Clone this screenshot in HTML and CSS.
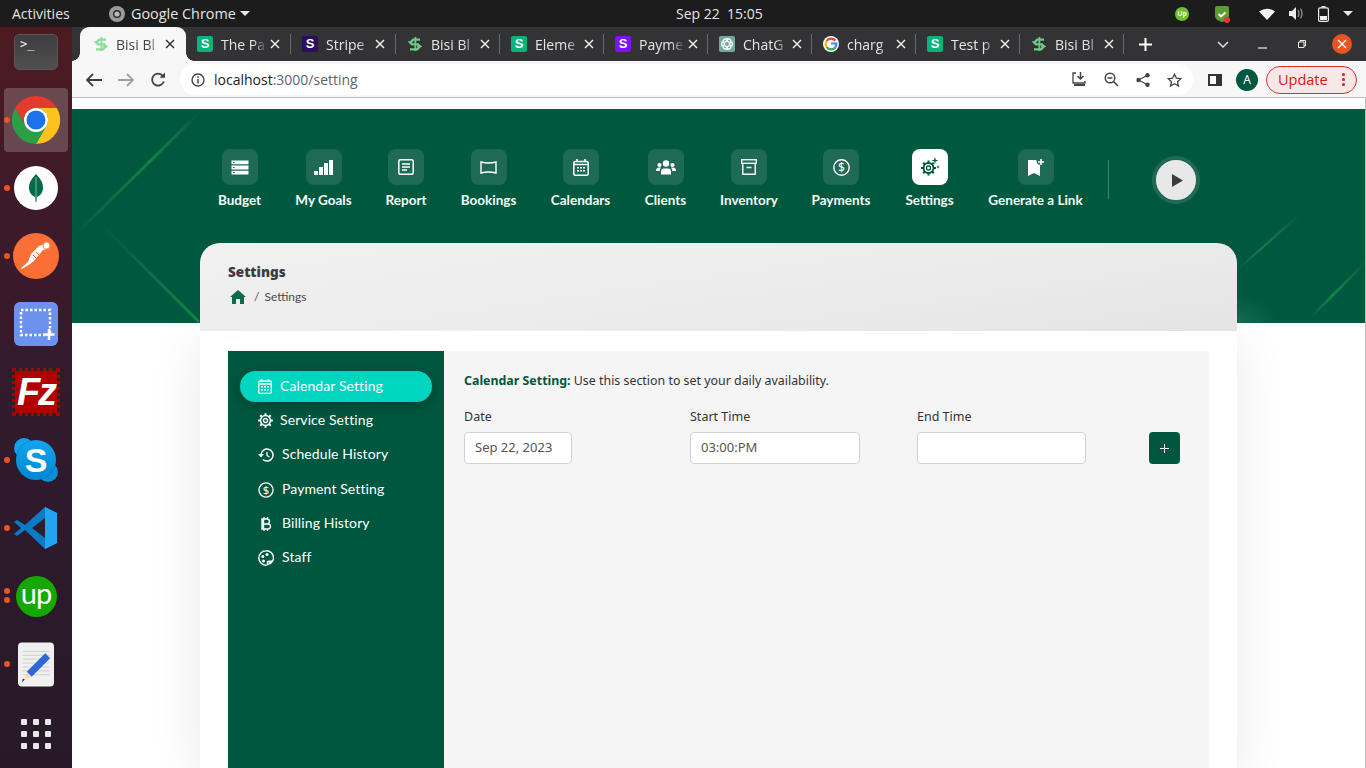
FILE: index.html
```html
<!DOCTYPE html>
<html lang="en">
<head>
<meta charset="utf-8">
<title>Settings</title>
<link rel="stylesheet" href="styles.css">
</head>
<body>
<svg class="defs" aria-hidden="true">
  <symbol id="bisi" viewBox="0 0 16 16">
    <path d="M13 3.600H6.200L3.200 6.600 5 8.400h6l2 2-3 3H3" fill="none" stroke="currentColor" stroke-width="2.300"/>
    <path d="M8.400 1v14" stroke="currentColor" stroke-width="1.800"/>
    <path d="M1 5.800h5M10 10.400h5" stroke="currentColor" stroke-width="1"/>
  </symbol>
  <symbol id="close" viewBox="0 0 10 10"><path d="M1 1l8 8M9 1l-8 8" stroke="currentColor" stroke-width="1.500"/></symbol>
</svg>

<header class="topbar">
  <span class="activities">Activities</span>
  <svg class="app-icon" width="16" height="16" viewBox="0 0 16 16"><circle cx="8" cy="8" r="8" fill="#9a9a9a"/><circle cx="8" cy="8" r="4" fill="#2a2a2a"/><circle cx="8" cy="8" r="2.600" fill="#b8b8b8"/></svg>
  <span class="appname">Google Chrome</span>
  <span class="caret"></span>
  <span class="clock">Sep 22&nbsp; 15:05</span>
  <div class="tray">
    <span class="tray-up">Up</span>
    <svg class="tray-shield" width="16" height="18" viewBox="0 0 16 18"><path d="M1 3q0-2 2-2h10q2 0 2 2v8q0 3-4 5l-3 1-3-1q-4-2-4-5z" fill="#5c9c36"/><path d="M4.500 9l2.500 2.500 4.500-4" fill="none" stroke="#fff" stroke-width="1.800"/><circle cx="13" cy="15" r="3" fill="#e33"/></svg>
    <svg class="tray-wifi" width="16" height="12" viewBox="0 0 16 12"><path d="M0 3.600Q8-2.200 16 3.600L8 12z" fill="#f2f2f2"/></svg>
    <svg class="tray-vol" width="15" height="13" viewBox="0 0 15 13"><path d="M0 4h3l4-4v13l-4-4H0z" fill="#eee"/><path d="M9 3q2 3.500 0 7M11.500 1.500q3 5 0 10" fill="none" stroke="#999" stroke-width="1.200"/></svg>
    <svg class="tray-bat" width="11" height="16" viewBox="0 0 11 16"><path d="M3.500 0h4v1.500h-4z" fill="#eee"/><rect x=".6" y="1.800" width="9.800" height="13.600" rx="1.500" fill="none" stroke="#eee" stroke-width="1.200"/><rect x="2" y="10" width="7" height="4" fill="#eee"/></svg>
    <span class="caret small"></span>
  </div>
</header>

<div class="desktop">
  <aside class="dock">
    <div class="slot first">
      <div class="terminal"><span>&gt;_</span></div>
    </div>
    <div class="slot running active">
      <svg width="48" height="48" viewBox="0 0 48 48">
        <path d="M24 0A24 24 0 0 0 3.200 12L13.600 30A12 12 0 0 1 24 12H44.800A24 24 0 0 0 24 0Z" fill="#e33b2e"/>
        <path d="M44.800 12H24A12 12 0 0 1 34.400 30L24 48A24 24 0 0 0 44.800 12Z" fill="#fcc31e"/>
        <path d="M3.200 12L13.600 30A12 12 0 0 0 34.400 30L24 48A24 24 0 0 1 3.200 12Z" fill="#2a9f48"/>
        <circle cx="24" cy="24" r="12" fill="#fff"/><circle cx="24" cy="24" r="9.500" fill="#1a73e8"/>
      </svg>
    </div>
    <div class="slot running">
      <svg width="44" height="44" viewBox="0 0 44 44"><circle cx="22" cy="22" r="22" fill="#fff"/><path d="M22 8q8 8 7 15-1 6-6 8l-.5 5h-1L21 31q-5-2-6-8-1-7 7-15z" fill="#046a4a"/><path d="M22 11v24" stroke="#bcd6cb" stroke-width=".7"/></svg>
    </div>
    <div class="slot running">
      <svg width="46" height="46" viewBox="0 0 46 46"><circle cx="23" cy="23" r="23" fill="#f96f36"/><path d="M34 9l3 3-3 4-4 1-9 11-4 3-8 5-1-1 7-6 3-8 8-8 3-1z" fill="#fff"/><path d="M23 19l5 5M20 22l5 5" stroke="#f96f36" stroke-width="1"/><circle cx="33.500" cy="12.500" r="3.500" fill="#fff" stroke="#f96f36" stroke-width=".8"/></svg>
    </div>
    <div class="slot">
      <svg width="44" height="44" viewBox="0 0 44 44"><rect width="44" height="44" rx="6" fill="#6c92ee"/><rect x="7" y="8" width="29" height="25" fill="none" stroke="#fff" stroke-width="2.500" stroke-dasharray="2.500 2"/><path d="M35 27v11M29.500 32.500h11" stroke="#fff" stroke-width="2.500"/></svg>
    </div>
    <div class="slot">
      <div class="filezilla"><span>Fz</span></div>
    </div>
    <div class="slot running">
      <div class="skype"><span>S</span></div>
    </div>
    <div class="slot running">
      <svg width="44" height="44" viewBox="0 0 44 44"><path d="M31 1l12 6v30l-12 6L11 24 3 30 0 28l7-6-7-6 3-2 8 5z" fill="#0a7bc4"/><path d="M31 1l12 6v30l-12 6z" fill="#22a4f1"/><path d="M31 12L18 22l13 10z" fill="#2e1c30"/></svg>
    </div>
    <div class="slot running double">
      <div class="upwork"><span>up</span></div>
    </div>
    <div class="slot running">
      <svg width="36" height="45" viewBox="0 0 37 45"><rect width="37" height="45" rx="4" fill="#f0f0f0"/><path d="M5 9h27M5 13h27M5 17h27M5 21h27M5 25h27M5 29h27M5 33h27" stroke="#cfcfcf"/><path d="M28 11l5 5L14 35l-5-5z" fill="#2f66d8"/><path d="M9 30l5 5-7 3z" fill="#f7d9b5"/><path d="M7 38l-3 3 1-4z" fill="#333"/></svg>
    </div>
    <div class="slot last">
      <div class="apps"><i></i><i></i><i></i><i></i><i></i><i></i><i></i><i></i><i></i></div>
    </div>
  </aside>

  <div class="browser">
    <div class="tabstrip">
      <div class="tab current"><svg class="fav bisi-light"><use href="#bisi"/></svg><span class="tab-title">Bisi Bl</span><svg class="tab-x"><use href="#close"/></svg></div>
      <div class="tab"><span class="fav s green">S</span><span class="tab-title">The Pa</span><svg class="tab-x"><use href="#close"/></svg></div>
      <div class="tab"><span class="fav s navy">S</span><span class="tab-title">Stripe</span><svg class="tab-x"><use href="#close"/></svg></div>
      <div class="tab"><svg class="fav bisi-mid"><use href="#bisi"/></svg><span class="tab-title">Bisi Bl</span><svg class="tab-x"><use href="#close"/></svg></div>
      <div class="tab"><span class="fav s green">S</span><span class="tab-title">Eleme</span><svg class="tab-x"><use href="#close"/></svg></div>
      <div class="tab"><span class="fav s purple">S</span><span class="tab-title">Payme</span><svg class="tab-x"><use href="#close"/></svg></div>
      <div class="tab"><svg class="fav" viewBox="0 0 16 16"><rect width="16" height="16" rx="2" fill="#74aa9c"/><g fill="none" stroke="#fff" stroke-width=".9"><circle cx="8" cy="8" r="5.500"/><ellipse cx="8" cy="8" rx="5.500" ry="2.400" transform="rotate(60 8 8)"/><ellipse cx="8" cy="8" rx="5.500" ry="2.400" transform="rotate(-60 8 8)"/><ellipse cx="8" cy="8" rx="5.500" ry="2.400"/></g></svg><span class="tab-title">ChatG</span><svg class="tab-x"><use href="#close"/></svg></div>
      <div class="tab"><svg class="fav" viewBox="0 0 16 16"><circle cx="8" cy="8" r="8" fill="#fff"/><g fill="none" stroke-width="2.200"><path d="M12.300 4.700A5.400 5.400 0 0 0 3.600 5" stroke="#ea4335"/><path d="M3.600 5a5.400 5.400 0 0 0 0 6" stroke="#fbbc05"/><path d="M3.600 11a5.400 5.400 0 0 0 8.600.500" stroke="#34a853"/><path d="M12.200 11.500A5.400 5.400 0 0 0 13.400 7.500H8" stroke="#4285f4"/></g></svg><span class="tab-title">charg</span><svg class="tab-x"><use href="#close"/></svg></div>
      <div class="tab"><span class="fav s green">S</span><span class="tab-title">Test p</span><svg class="tab-x"><use href="#close"/></svg></div>
      <div class="tab"><svg class="fav bisi-mid"><use href="#bisi"/></svg><span class="tab-title">Bisi Bl</span><svg class="tab-x"><use href="#close"/></svg></div>
      <svg class="newtab" width="13" height="13" viewBox="0 0 13 13"><path d="M6.500 0v13M0 6.500h13" stroke="#fff" stroke-width="2"/></svg>
      <svg class="win chev" width="12" height="7" viewBox="0 0 12 7"><path d="M1 1l5 5 5-5" fill="none" stroke="#ddd" stroke-width="1.500"/></svg>
      <svg class="win min" width="9" height="9" viewBox="0 0 9 9"><path d="M0 8h9" stroke="#eee" stroke-width="1.200"/></svg>
      <svg class="win max" width="8" height="8" viewBox="0 0 8 8"><path d="M2 2V.5h5.500V6H6M.5 2h5.500v5.500H.5z" fill="none" stroke="#eee"/></svg>
      <span class="win-close"><svg width="10" height="10" viewBox="0 0 10 10"><path d="M1 1l8 8M9 1l-8 8" stroke="#fff" stroke-width="1.500"/></svg></span>
    </div>

    <div class="toolbar">
      <svg class="tb first-tb" width="16" height="14" viewBox="0 0 16 14"><path d="M7 1L1 7l6 6M1 7h15" fill="none" stroke="#3c4043" stroke-width="1.800"/></svg>
      <svg class="tb" width="16" height="14" viewBox="0 0 16 14"><path d="M9 1l6 6-6 6M15 7H0" fill="none" stroke="#a0a0a0" stroke-width="1.800"/></svg>
      <svg class="tb" width="16" height="16" viewBox="0 0 16 16"><path d="M13.800 9.500A6 6 0 1 1 12.500 3.500" fill="none" stroke="#3c4043" stroke-width="1.800"/><path d="M9.500 5.800H15V.5z" fill="#3c4043"/></svg>
      <div class="omnibox">
        <svg class="info" width="14" height="14" viewBox="0 0 14 14"><circle cx="7" cy="7" r="6" fill="none" stroke="#444" stroke-width="1.400"/><path d="M7 6v4.500M7 3.300v1.500" stroke="#444" stroke-width="1.500"/></svg>
        <span class="url"><b>localhost</b>:3000/setting</span>
        <svg class="omni-i first-omni" width="16" height="15" viewBox="0 0 16 15"><path d="M4 1H1v10h12V9" fill="none" stroke="#444" stroke-width="1.300"/><path d="M8.500 0v6M5.500 4l3 3 3-3" fill="none" stroke="#444" stroke-width="1.500"/><path d="M2 13h11" stroke="#444" stroke-width="2"/></svg>
        <svg class="omni-i" width="15" height="15" viewBox="0 0 15 15"><circle cx="6" cy="6" r="4.800" fill="none" stroke="#444" stroke-width="1.400"/><path d="M9.500 9.500L14 14M3.500 6h5" stroke="#444" stroke-width="1.500"/></svg>
        <svg class="omni-i" width="14" height="14" viewBox="0 0 14 14"><circle cx="11.500" cy="2.300" r="2.200" fill="#444"/><circle cx="2.500" cy="7" r="2.200" fill="#444"/><circle cx="11.500" cy="11.700" r="2.200" fill="#444"/><path d="M11.500 2.300L2.500 7l9 4.700" fill="none" stroke="#444" stroke-width="1.200"/></svg>
        <svg class="omni-i" width="15" height="14" viewBox="0 0 15 14"><path d="M7.500 1.200l1.900 4 4.400.5-3.300 3 .9 4.300-3.900-2.200L3.600 13l.9-4.300-3.300-3 4.400-.5z" fill="none" stroke="#444" stroke-width="1.300"/></svg>
      </div>
      <svg class="panel" width="14" height="12" viewBox="0 0 14 12"><path d="M0 0h14v12H0z" fill="#333"/><path d="M2 2h6v8H2z" fill="#fff"/></svg>
      <span class="avatar">A</span>
      <div class="update"><span>Update</span><i class="dots"><b></b><b></b><b></b></i></div>
    </div>

    <main class="page">
      <section class="hero">
        <svg class="streaks" viewBox="0 0 1293 214" preserveAspectRatio="none" aria-hidden="true">
          <defs>
            <linearGradient id="st1" x1="1" y1="0" x2="0" y2="1"><stop offset="0" stop-color="#12844a" stop-opacity="0"/><stop offset=".4" stop-color="#12844a"/><stop offset="1" stop-color="#12844a" stop-opacity="0"/></linearGradient>
            <linearGradient id="st2" x1="0" y1="0" x2="1" y2="1"><stop offset="0" stop-color="#12844a" stop-opacity="0"/><stop offset="1" stop-color="#12844a"/></linearGradient>
            <linearGradient id="st3" x1="1" y1="0" x2="0" y2="1"><stop offset="0" stop-color="#12844a" stop-opacity=".1"/><stop offset=".6" stop-color="#12844a"/><stop offset="1" stop-color="#12844a" stop-opacity="0"/></linearGradient>
            <radialGradient id="glow"><stop offset="0" stop-color="#2c7a62" stop-opacity=".5"/><stop offset="1" stop-color="#2c7a62" stop-opacity="0"/></radialGradient>
            <filter id="soft"><feGaussianBlur stdDeviation=".7"/></filter>
          </defs>
          <ellipse cx="1165" cy="214" rx="40" ry="28" fill="url(#glow)"/>
          <g filter="url(#soft)">
            <path d="M131 0L0 129" stroke="url(#st1)" stroke-width="3"/>
            <path d="M27 113L127 213" stroke="url(#st2)" stroke-width="3"/>
            <path d="M1294 153L1238 209" stroke="url(#st3)" stroke-width="3"/>
            <path d="M1227 106L1165 161" stroke="url(#st3)" stroke-width="2"/>
          </g>
        </svg>
        <nav class="mainnav">
          <a class="navitem"><span class="tile"><svg width="18" height="15" viewBox="0 0 18 15"><path d="M.5.500h17v3.800H.5zM.5 5.600h17v3.800H.5zM.5 10.700h17v3.800H.5z" fill="#fff"/><path d="M2 2h1.500v1H2zM2 7h1.500v1H2zM2 12h1.500v1H2z" fill="#1f6a55"/></svg></span><span class="lbl">Budget</span></a>
          <a class="navitem"><span class="tile"><svg width="19" height="15" viewBox="0 0 19 15"><path d="M0 11h4v4H0zM5 7h4v8H5zM10 3h4v12h-4zM15 0h4v15h-4z" fill="#fff"/></svg></span><span class="lbl">My Goals</span></a>
          <a class="navitem"><span class="tile"><svg width="16" height="16" viewBox="0 0 16 16"><rect x=".8" y=".8" width="14.400" height="14.400" rx="1.500" fill="none" stroke="#fff" stroke-width="1.500"/><path d="M4 5h8M4 8h8M4 11h5" stroke="#fff" stroke-width="1.400"/></svg></span><span class="lbl">Report</span></a>
          <a class="navitem"><span class="tile"><svg width="17" height="13" viewBox="0 0 17 13"><path d="M1 1q7.500 2 15 0v11q-7.500-2-15 0z" fill="none" stroke="#fff" stroke-width="1.400"/></svg></span><span class="lbl">Bookings</span></a>
          <a class="navitem"><span class="tile"><svg width="16" height="17" viewBox="0 0 16 17"><rect x=".8" y="2.500" width="14.400" height="13.700" rx="1.500" fill="none" stroke="#fff" stroke-width="1.500"/><path d="M4 0v3M12 0v3M1 5.500h14" stroke="#fff" stroke-width="1.500"/><path d="M4 8h2v1.500H4zM7 8h2v1.500H7zM10 8h2v1.500h-2zM4 11h2v1.500H4zM7 11h2v1.500H7zM10 11h2v1.500h-2z" fill="#fff"/></svg></span><span class="lbl">Calendars</span></a>
          <a class="navitem"><span class="tile"><svg width="20" height="15" viewBox="0 0 20 15"><circle cx="10" cy="3.500" r="3.200" fill="#fff"/><circle cx="3.500" cy="5" r="2.100" fill="#fff"/><circle cx="16.500" cy="5" r="2.100" fill="#fff"/><path d="M5 14.500v-3q0-3 3-3h4q3 0 3 3v3z" fill="#fff"/><path d="M0 11q0-3.500 3-3.500h2Q3.500 9 3.700 11zM20 11q0-3.500-3-3.500h-2q1.500 1.500 1.300 3.500z" fill="#fff"/></svg></span><span class="lbl">Clients</span></a>
          <a class="navitem"><span class="tile"><svg width="16" height="16" viewBox="0 0 16 16"><rect x=".7" y=".7" width="14.600" height="3.600" fill="none" stroke="#fff" stroke-width="1.400"/><path d="M1.800 4.500v10.800h12.400V4.500" fill="none" stroke="#fff" stroke-width="1.400"/><path d="M5.500 8.500h5" stroke="#fff" stroke-width="1.500"/></svg></span><span class="lbl">Inventory</span></a>
          <a class="navitem"><span class="tile"><svg width="17" height="17" viewBox="0 0 17 17"><circle cx="8.500" cy="8.500" r="7.700" fill="none" stroke="#fff" stroke-width="1.400"/><text class="dollar" x="8.500" y="12.800" text-anchor="middle">$</text></svg></span><span class="lbl">Payments</span></a>
          <a class="navitem on"><span class="tile"><svg width="20" height="20" viewBox="0 0 20 20"><g transform="translate(8.500 11)"><circle r="2" fill="none" stroke="#00573f" stroke-width="1.300"/><circle r="5" fill="none" stroke="#00573f" stroke-width="2"/><path d="M0-7.500v2.500M0 5v2.500M-7.500 0H-5M5 0h2.500M-5.300-5.300l1.800 1.800M3.500 3.500l1.800 1.800M5.300-5.300L3.500-3.500M-3.500 3.500l-1.800 1.800" stroke="#00573f" stroke-width="2"/></g><path d="M15 0l.8 2.700 2.700.8-2.700.8-.8 2.700-.8-2.700-2.700-.8 2.700-.8zM18 8l.5 1.500L20 10l-1.500.5L18 12l-.5-1.500L16 10l1.500-.5z" fill="#00573f"/></svg></span><span class="lbl">Settings</span></a>
          <a class="navitem"><span class="tile"><svg width="18" height="17" viewBox="0 0 18 17"><path d="M1 1h8.500q-.5 4 3.500 5v11L7 14l-6 3z" fill="#fff"/><path d="M14 0v6M11 3h6" stroke="#fff" stroke-width="1.600"/></svg></span><span class="lbl">Generate a Link</span></a>
          <span class="navdiv"></span>
          <button class="play" type="button" aria-label="Play"><svg width="11" height="13" viewBox="0 0 11 13"><path d="M0 0l11 6.500L0 13z" fill="#3c3c3c"/></svg></button>
        </nav>
        <div class="crumbs">
          <h1>Settings</h1>
          <div class="trail">
            <svg width="16" height="14" viewBox="0 0 16 14"><path d="M8 0l8 7h-2v7h-4V9H6v5H2V7H0z" fill="#0b6b4f"/></svg>
            <span class="sep">/</span><span>Settings</span>
          </div>
        </div>
      </section>

      <section class="card">
        <aside class="sidebar">
          <a class="side on"><svg width="14" height="15" viewBox="0 0 14 15"><rect x=".7" y="2" width="12.600" height="12.300" rx="1.200" fill="none" stroke="#fff" stroke-width="1.300"/><path d="M3.500 0v3M10.500 0v3M1 5h12" stroke="#fff" stroke-width="1.300"/><path d="M3 7h2v1.500H3zM6 7h2v1.500H6zM9 7h2v1.500H9zM3 10h2v1.500H3zM6 10h2v1.500H6zM9 10h2v1.500H9z" fill="#fff"/></svg><span>Calendar Setting</span></a>
          <a class="side"><svg width="15" height="15" viewBox="-7.500 -7.500 15 15"><circle r="2" fill="none" stroke="#fff" stroke-width="1.300"/><circle r="4.900" fill="none" stroke="#fff" stroke-width="1.500"/><path d="M0-7.300v2.400M0 4.900v2.400M-7.300 0h2.400M4.900 0h2.400M-5.200-5.200l1.700 1.700M3.500 3.500l1.700 1.700M5.200-5.200L3.500-3.500M-3.500 3.500l-1.700 1.700" stroke="#fff" stroke-width="2"/></svg><span>Service Setting</span></a>
          <a class="side wide"><svg width="16" height="14" viewBox="0 0 16 14"><path d="M3 7a6 6 0 1 1 2 4.500" fill="none" stroke="#fff" stroke-width="1.500"/><path d="M0 6h6L3 9.500z" fill="#fff"/><path d="M9 4v3.500l2.500 1.500" fill="none" stroke="#fff" stroke-width="1.300"/></svg><span>Schedule History</span></a>
          <a class="side wide"><svg width="16" height="16" viewBox="0 0 17 17"><circle cx="8.500" cy="8.500" r="7.500" fill="none" stroke="#fff" stroke-width="1.400"/><text class="dollar" x="8.500" y="12.800" text-anchor="middle">$</text></svg><span>Payment Setting</span></a>
          <a class="side wide"><svg width="16" height="16" viewBox="-2 0 16 16"><path d="M2 3h5a2.500 2.500 0 0 1 0 5H2h6a2.500 2.500 0 0 1 0 5H2zM3.500 3v10M4 1v2M7.500 1v2M4 13v2M7.500 13v2" fill="none" stroke="#fff" stroke-width="1.400"/></svg><span>Billing History</span></a>
          <a class="side wide"><svg width="16" height="16" viewBox="0 0 16 16"><path d="M8 .8a7.200 7.200 0 1 0 0 14.400q2 0 1.500-2-.5-2 1.500-2h2.500q2 0 2-3A7.200 7.200 0 0 0 8 .8z" fill="none" stroke="#fff" stroke-width="1.400"/><path d="M10 15l1-4h4q-1 3.500-5 4z" fill="#fff"/><circle cx="4.800" cy="6.500" r="1.500" fill="#fff"/><circle cx="9" cy="4.500" r="1.500" fill="#fff"/><circle cx="5.500" cy="11" r="1.500" fill="#fff"/></svg><span>Staff</span></a>
        </aside>
        <div class="panel-main">
          <p class="intro"><strong>Calendar Setting:</strong> Use this section to set your daily availability.</p>
          <form class="avail">
            <label class="field"><span>Date</span><input class="in-date" type="text" value="Sep 22, 2023"></label>
            <label class="field"><span>Start Time</span><input class="in-start" type="text" value="03:00:PM"></label>
            <label class="field"><span>End Time</span><input class="in-end" type="text" value=""></label>
            <button class="add" type="button" aria-label="Add"><svg width="9" height="9" viewBox="0 0 9 9"><path d="M4.500 0v9M0 4.500h9" stroke="#fff" stroke-width="1"/></svg></button>
          </form>
        </div>
      </section>
    </main>
  </div>
</div>
</body>
</html>
```

FILE: styles.css
```css
* { box-sizing: border-box; }
html, body { margin: 0; height: 768px; overflow: hidden; }
body { font-family: "Noto Sans", "Open Sans", sans-serif; background: #fff; display: flex; flex-direction: column; }
.defs { display: none; }

/* GNOME top bar */
.topbar { height: 27px; flex: none; background: #1c1c1c; color: #e4e4e4; display: flex; align-items: center; font-size: 14px; font-family: "Open Sans", sans-serif; padding-left: 12px; }
.activities { width: 97px; }
.app-icon { margin-right: 6px; }
.appname { width: 109px; white-space: nowrap; font-size: 14.4px; }
.caret { width: 0; height: 0; border-left: 5px solid transparent; border-right: 5px solid transparent; border-top: 5px solid #e8e8e8; }
.clock { margin-left: 426px; width: 100px; white-space: nowrap; font-size: 14px; }
.tray { margin-left: 399px; display: flex; align-items: center; }
.tray-up { width: 14px; height: 14px; border-radius: 50%; background: #6cc02f; color: #e8ffd8; font-size: 7px; font-weight: 700; text-align: center; line-height: 14px; margin-right: 25px; }
.tray-shield { margin-right: 29px; }
.tray-wifi { margin-right: 14px; }
.tray-vol { margin-right: 14px; }
.tray-bat { margin-right: 14px; }

.desktop { flex: 1; display: flex; min-height: 0; }

/* Dock */
.dock { width: 72px; flex: none; background: linear-gradient(#4d1b20 0, #3d1a2a 25%, #2f1a2c 60%, #271a28 100%); display: flex; flex-direction: column; align-items: center; }
.slot { position: relative; width: 72px; height: 68px; flex: none; display: flex; align-items: center; justify-content: center; }
.slot.first { height: 59px; align-items: flex-start; padding-top: 7px; }
.slot.last { padding-top: 4px; }
.slot.active::before { content: ""; position: absolute; left: 4px; top: 2px; width: 64px; height: 64px; border-radius: 4px; background: rgba(255, 255, 255, .2); }
.slot > * { position: relative; }
.slot.running::after { content: ""; position: absolute; left: 4px; top: 31px; width: 6px; height: 6px; border-radius: 50%; background: #e95420; }
.slot.double::after { top: 26px; box-shadow: 0 9px 0 #e95420; }
.terminal { width: 44px; height: 36px; border-radius: 5px; background: linear-gradient(#3d3d3d, #505050); border: 1px solid #5d5555; color: #eee; font: 12px/1 "DejaVu Sans Mono", monospace; padding: 3px 0 0 5px; }
.filezilla { width: 48px; height: 48px; background: #b00000; background-clip: padding-box; border: 3px dotted #a50000; display: flex; align-items: center; justify-content: center; color: #fff; font: italic 700 38px/1 "Liberation Sans", sans-serif; letter-spacing: -2px; }
.skype { width: 40px; height: 40px; border-radius: 50%; background: linear-gradient(#12a5ee, #0286d4); box-shadow: -12px -12px 0 -10px #0aa5ee, 12px 12px 0 -10px #0a8fd8; color: #fff; font: 700 34px/40px "Liberation Sans", sans-serif; text-align: center; }
.upwork { width: 41px; height: 41px; border-radius: 50%; background: #14a800; color: #fff; font: 400 29px/34px "Lato", sans-serif; letter-spacing: -1px; text-align: center; }
.apps { width: 30px; display: grid; grid-template-columns: repeat(3, 6px); gap: 6px; }
.apps i { width: 6px; height: 6px; border-radius: 1px; background: #e8e6e8; }

/* Browser */
.browser { flex: 1; min-width: 0; display: flex; flex-direction: column; }
.tabstrip { height: 34px; flex: none; background: #333335; display: flex; align-items: center; padding-left: 8px; color: #e6e6e6; }
.tab { width: 104px; height: 34px; flex: none; display: flex; align-items: center; padding-left: 12px; position: relative; font-size: 14px; font-family: "Open Sans", sans-serif; }
.tab:nth-child(2) { width: 105px; margin-left: -1px; }
.tab:nth-child(3) { width: 105px; }
.tab::after { content: ""; position: absolute; right: -1px; top: 7px; height: 20px; width: 1px; background: #6a6a6c; }
.tab.current { width: 106px; background: #f7f7f7; color: #444; border-radius: 9px 9px 0 0; padding-left: 13px; z-index: 1; }
.tab.current::before, .tab.current::after { content: ""; position: absolute; bottom: 0; top: auto; width: 8px; height: 8px; background: radial-gradient(circle at 0 0, transparent 7.500px, #f7f7f7 8px); }
.tab.current::before { left: -8px; }
.tab.current::after { right: -8px; background: radial-gradient(circle at 100% 0, transparent 7.500px, #f7f7f7 8px); }
.tab.current .tab-x { color: #333; }
.tab.current .fav { margin-right: 7px; }
.fav { width: 16px; height: 16px; flex: none; margin-right: 8px; display: block; }
.bisi-light { color: #8fdc9f; }
.bisi-mid { color: #6fc98a; }
.s { border-radius: 2px; color: #fff; font: 700 13px/16px "Liberation Sans", sans-serif; text-align: center; }
.green { background: #09b37a; }
.navy { background: #2b0f5c; }
.purple { background: #7a13f5; }
.tab-title { width: 46px; overflow: hidden; white-space: nowrap; -webkit-mask-image: linear-gradient(90deg, #000 70%, transparent 100%); mask-image: linear-gradient(90deg, #000 70%, transparent 100%); }
.tab-x { width: 10px; height: 10px; margin-left: 3px; color: #eee; flex: none; }
.newtab { margin-left: 16px; }
.chev { margin-left: 65px; }
.min { margin-left: 29px; }
.max { margin-left: 31px; }
.win-close { margin-left: 26px; width: 20px; height: 20px; border-radius: 50%; background: #e95420; display: flex; align-items: center; justify-content: center; }

.toolbar { height: 37px; flex: none; background: #f7f7f7; display: flex; align-items: center; border-bottom: 1px solid #bdbdbd; padding-top: 1px; padding-left: 14px; }
.tb { margin-right: 16px; flex: none; }
.omnibox { width: 1013px; height: 31px; margin-left: -2px; background: #fff; border-radius: 16px; display: flex; align-items: center; padding-left: 11px; }
.info { margin-right: 9px; flex: none; }
.url { font-size: 14px; color: #5f6368; font-family: "Open Sans", sans-serif; width: 858px; flex: none; white-space: nowrap; }
.url b { font-weight: 400; color: #202124; }
.omni-i { margin-right: 17px; flex: none; }
.first-omni { margin-right: 16px; }
.panel { margin-left: 15px; flex: none; }
.avatar { margin-left: 14px; width: 22px; height: 22px; border-radius: 50%; background: #00573f; color: #fff; font-size: 12px; line-height: 22px; text-align: center; flex: none; }
.update { margin-left: 8px; width: 91px; height: 28px; border: 1px solid #d93025; border-radius: 14px; background: #f8e7e6; color: #d01c12; font-size: 14.5px; font-family: "Open Sans", sans-serif; display: flex; align-items: center; padding-left: 11px; justify-content: space-between; padding-right: 11px; }
.dots { display: flex; flex-direction: column; gap: 2px; }
.dots b { width: 3px; height: 3px; border-radius: 50%; background: #d01c12; display: block; }

/* Page */
.page { flex: 1; min-height: 0; background: #fff; border-right: 1px solid #bdbdbd; padding-top: 11px; overflow: hidden; display: flex; flex-direction: column; }
.hero { height: 214px; flex: none; background: #00593f; position: relative; z-index: 1; padding: 40px 128px 0 128px; display: flex; flex-direction: column; }
.streaks { position: absolute; left: 0; top: 0; width: 100%; height: 100%; }
.mainnav { position: relative; display: grid; grid-template-columns: 43px 55px 40px 55px 59px 41px 56px 58px 49px 93px 1px 36px; column-gap: 35px; align-items: start; height: 94px; margin-left: 18px; }
.navitem { display: flex; flex-direction: column; align-items: center; color: #fff; }
.tile { width: 36px; height: 36px; border-radius: 8px; background: #1f6a55; display: flex; align-items: center; justify-content: center; flex: none; }
.navitem.on .tile { background: #fff; }
.lbl { margin-top: 5px; font: 700 13.5px/20px "Lato", sans-serif; white-space: nowrap; color: #f3fbf8; }
.navdiv { width: 1px; height: 39px; background: #3d8270; margin: 11px 0 0 -9px; }
.play { width: 48px; height: 48px; padding: 0; border-radius: 50%; border: 4px solid #1f6a55; background: #e8e8e8; display: flex; align-items: center; justify-content: center; margin: 7px 0 0 -1px; }
.play svg { margin-left: 3px; }
.dollar { fill: #fff; font: 400 12px "Noto Sans", sans-serif; }

.crumbs { position: relative; height: 88px; margin-bottom: -8px; background: linear-gradient(172deg, #f1f1f1 0, #ebebeb 60%, #e4e4e4 100%); border-radius: 20px 20px 0 0; padding: 21px 28px 0; flex: none; }
.crumbs h1 { margin: 0; font: 900 13.5px/17px "Noto Sans", sans-serif; color: #3b3b40; }
.trail { display: flex; align-items: center; margin-top: 8px; font: 400 12px/16px "Lato", sans-serif; color: #4a4a50; margin-left: 2px; }
.sep { margin: 0 5px 0 8px; }

.card { position: relative; flex: 1; min-height: 0; margin: 8px 128px 0; background: #fff; padding: 20px 28px 0; display: flex; box-shadow: 0 10px 50px rgba(0, 0, 0, .09); }
.sidebar { width: 216px; flex: none; background: #00573f; padding: 20px 12px 0; display: grid; grid-auto-rows: 31px; row-gap: 3.4px; align-content: start; }
.side { display: flex; align-items: center; height: 31px; padding: 0 0 2px 18px; color: #fff; font: 400 14px/20px "Lato", sans-serif; letter-spacing: .1px; border-radius: 16px; white-space: nowrap; }
.side svg { flex: none; margin-right: 7px; margin-top: 2px; }
.side.on svg { margin-right: 8px; }
.side.wide svg { margin-right: 8px; }
.side.on { background: #00d6bf; box-shadow: 0 4px 14px rgba(0, 0, 0, .25); }
.panel-main { flex: 1; background: #f5f5f5; padding: 21px 20px 0; }
.intro { margin: 0; font: 400 12.4px/17px "Noto Sans", sans-serif; color: #333; white-space: nowrap; }
.intro strong { color: #00573f; font-weight: 700; }
.avail { margin-top: 19px; display: grid; grid-template-columns: 226px 227px 232px 31px; align-items: end; }
.field { display: flex; flex-direction: column; font: 400 12.5px/17px "Noto Sans", sans-serif; color: #333; }
.field span { margin-bottom: 7px; }
.field input { height: 32px; border: 1px solid #cfd2d8; border-radius: 4px; background: #fff; padding: 0 10px 2px; font: 400 13px "Noto Sans", sans-serif; color: #555; outline: 0; }
.in-date { width: 108px; }
.in-start { width: 170px; }
.in-end { width: 169px; }
.add { width: 31px; height: 32px; border: 0; padding: 0; border-radius: 4px; background: #00573f; display: flex; align-items: center; justify-content: center; }
```
